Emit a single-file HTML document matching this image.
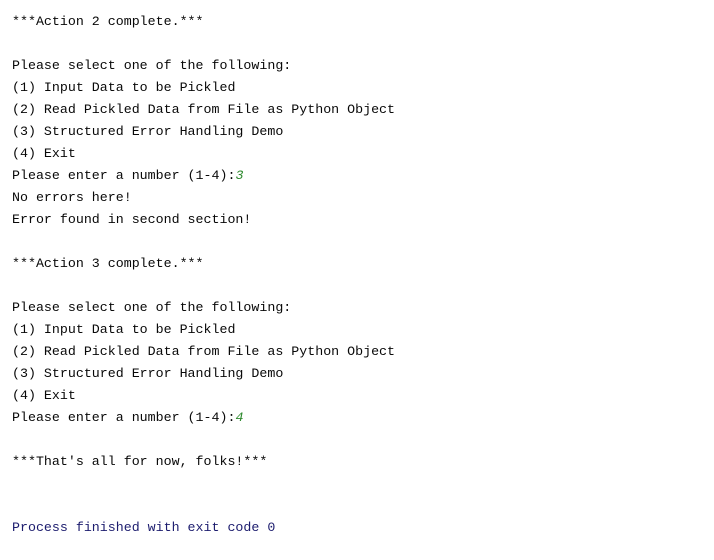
<!DOCTYPE html>
<html><head><meta charset="utf-8"><style>
html,body{margin:0;padding:0;background:#fff;width:714px;height:560px;overflow:hidden}
pre{margin:0;position:absolute;left:12px;top:11px;font-family:"Liberation Mono",monospace;font-size:13.3px;line-height:22px;color:#080808}
.g{color:#2f8a2f;font-style:italic}
.p{color:#1c1c6e}
</style></head><body><pre>***Action 2 complete.***

Please select one of the following:
(1) Input Data to be Pickled
(2) Read Pickled Data from File as Python Object
(3) Structured Error Handling Demo
(4) Exit
Please enter a number (1-4):<span class="g">3</span>
No errors here!
Error found in second section!

***Action 3 complete.***

Please select one of the following:
(1) Input Data to be Pickled
(2) Read Pickled Data from File as Python Object
(3) Structured Error Handling Demo
(4) Exit
Please enter a number (1-4):<span class="g">4</span>

***That's all for now, folks!***


<span class="p">Process finished with exit code 0</span></pre></body></html>
